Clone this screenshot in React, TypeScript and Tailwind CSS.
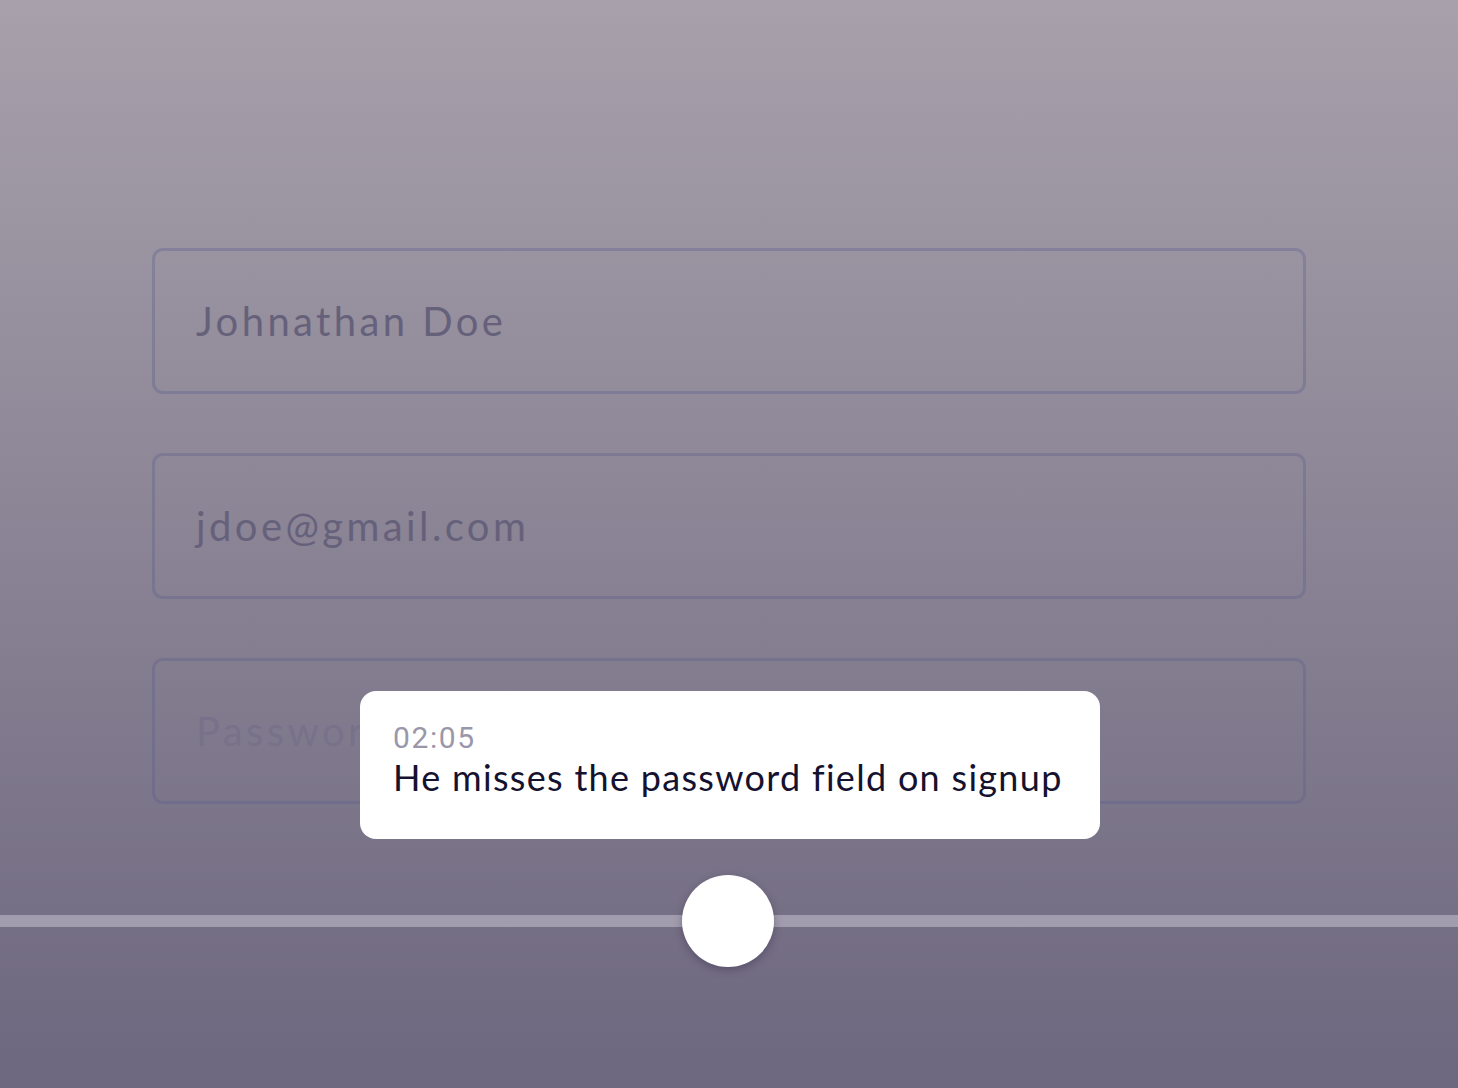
import React from "react";

function Field({ text, placeholder }: { text: string; placeholder?: boolean }) {
  return (
    <div className="h-[146px] rounded-[11px] border-[3px] border-[rgba(92,95,140,0.35)] flex items-center pl-[41px]">
      <span
        className={
          "text-[40px] tracking-[3.4px] " + (placeholder ? "text-[#777289]" : "text-[#66617b]")
        }
        style={{ fontFamily: "Lato, 'Noto Sans', sans-serif" }}
      >
        {text}
      </span>
    </div>
  );
}

export default function App() {
  return (
    <div
      className="w-full h-[1088px] overflow-hidden bg-gradient-to-b from-[#a8a1ab] to-[#6d677f] flex flex-col"
      style={{ fontFamily: "Lato, 'Noto Sans', sans-serif" }}
    >
      <div className="mx-[152px] mt-[248px] flex flex-col gap-[59px]">
        <Field text="Johnathan Doe" />
        <Field text="jdoe@gmail.com" />
        <Field text="Password" placeholder />
      </div>
      <div className="relative mt-[111px] h-[12px] bg-[#a29dae]">
        <div className="absolute left-[682px] top-[-40px] w-[92px] h-[92px] rounded-full bg-white shadow-[0_3px_8px_rgba(40,30,60,0.35)]" />
        <div className="absolute left-[360px] top-[-224px] w-[740px] h-[148px] rounded-[16px] bg-white pl-[33px] pt-[30px]">
          <div
            className="text-[30px] leading-[34px] tracking-[1.6px] text-[#9b97aa]"
            style={{ fontFamily: "Roboto, sans-serif" }}
          >
            02:05
          </div>
          <div className="text-[36px] leading-[44px] text-[#15122f] tracking-[1.3px]">
            He misses the password field on signup
          </div>
        </div>
      </div>
    </div>
  );
}
